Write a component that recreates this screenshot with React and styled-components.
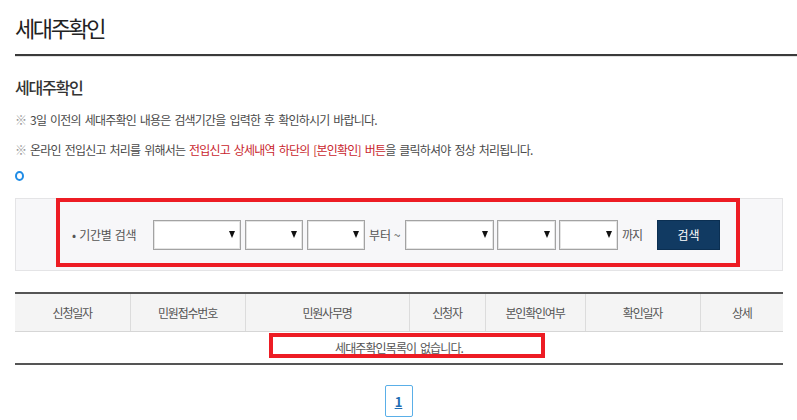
import React from "react";
import styled, { createGlobalStyle } from "styled-components";

const Global = createGlobalStyle`
  html, body { margin: 0; padding: 0; background: #fff; }
  body {
    font-family: "Noto Sans CJK KR", "Noto Sans", sans-serif;
    color: #555;
    overflow: hidden;
  }
  * { box-sizing: border-box; }
`;

const Page = styled.div`
  width: 797px;
  padding-left: 15px;
`;

const TitleBar = styled.div`
  height: 56px;
  padding-top: 12px;
  border-bottom: 2px solid #3a3a3a;
  box-shadow: 0 1px 0 #e2e2e2;
`;

const Title = styled.h1`
  margin: 0;
  font-size: 22px;
  font-weight: 400;
  letter-spacing: -2.4px;
  line-height: 30px;
  color: #222;
`;

const Content = styled.div`
  width: 768px;
`;

const SubTitle = styled.h2`
  margin: 19px 0 0;
  font-size: 16px;
  font-weight: 500;
  letter-spacing: -1.2px;
  line-height: 24px;
  color: #333;
`;

const Note = styled.p`
  margin: ${(p) => p.$top}px 0 0;
  font-size: 12px;
  letter-spacing: -0.8px;
  word-spacing: 2px;
  line-height: 18px;
  color: #4a4a4a;
`;

const Mark = styled.span`
  color: #999;
`;

const Red = styled.span`
  color: #c9262d;
`;

const Ring = styled.span`
  display: block;
  margin-top: 12px;
  width: 9px;
  height: 10px;
  border: 2.5px solid #1f8ce6;
  border-radius: 50%;
`;

const SearchBox = styled.div`
  position: relative;
  margin-top: 17px;
  height: 73px;
  background: #f7f7f9;
  border: 1px solid #e4e4e6;
  display: flex;
  align-items: center;
  justify-content: center;
  padding-right: 6px;
`;

const SearchRow = styled.div`
  display: flex;
  align-items: center;
  font-size: 12px;
  color: #555;
  white-space: nowrap;
`;

const Label = styled.span`
  width: 70px;
  margin-right: 11px;
  letter-spacing: -0.3px;
  word-spacing: 1px;
`;

const Word = styled.span`
  width: ${(p) => p.$w}px;
  margin: 0 ${(p) => p.$r}px 0 4px;
  letter-spacing: ${(p) => p.$ls}px;
`;

const SelectWrap = styled.div`
  position: relative;
  width: ${(p) => p.$w}px;
  height: 30px;
  margin-left: ${(p) => p.$gap || 0}px;
`;

const Select = styled.select`
  appearance: none;
  width: 100%;
  height: 100%;
  background: #fff;
  border: 1px solid #a3a3a3;
  box-shadow: inset 0 0 0 1px #e4e4e4;
  border-radius: 0;
  outline: none;
  font-family: inherit;
`;

const Arrow = styled.span`
  position: absolute;
  right: 6px;
  top: 11px;
  width: 0;
  height: 0;
  border-left: 3.5px solid transparent;
  border-right: 3.5px solid transparent;
  border-top: 7px solid #111;
  pointer-events: none;
`;

const SearchButton = styled.button`
  margin-left: 13px;
  width: 63px;
  height: 30px;
  border: 1px solid #0b2f52;
  background: #113a62;
  color: #fff;
  font-family: inherit;
  font-size: 12px;
  letter-spacing: 0;
  padding: 0;
`;

const Highlight = styled.div`
  position: absolute;
  left: ${(p) => p.$l}px;
  top: ${(p) => p.$t}px;
  width: ${(p) => p.$w}px;
  height: ${(p) => p.$h}px;
  border: 4px solid #ed1c24;
  pointer-events: none;
`;

const Table = styled.table`
  margin-top: 21px;
  width: 768px;
  border-collapse: collapse;
  table-layout: fixed;
  border-top: 2px solid #555;
  border-bottom: 2px solid #555;
  font-size: 12px;
  letter-spacing: -1.2px;
  color: #555;
`;

const Th = styled.th`
  width: ${(p) => p.$w}px;
  height: 38px;
  background: #f4f4f4;
  font-weight: 400;
  border-left: 1px solid #dcdcdc;
  border-bottom: 1px solid #d6d6d6;
  &:first-child { border-left: none; }
`;

const Td = styled.td`
  position: relative;
  height: 33px;
  text-align: center;
  padding: 0;
  letter-spacing: -0.9px;
  word-spacing: 2px;
`;

const Pager = styled.div`
  width: 768px;
  display: flex;
  justify-content: center;
  margin-top: 20px;
`;

const PageNum = styled.a`
  width: 28px;
  height: 32px;
  display: flex;
  align-items: center;
  justify-content: center;
  border: 1px solid #5aafe8;
  border-radius: 2px;
  color: #1f6db3;
  font-weight: 700;
  font-size: 13px;
  text-decoration: underline;
  margin-left: -1px;
`;

const cols = [
  ["신청일자", 115],
  ["민원접수번호", 115],
  ["민원사무명", 164],
  ["신청자", 76],
  ["본인확인여부", 100],
  ["확인일자", 115],
  ["상세", 83],
];

function Dropdown({ w, gap }) {
  return (
    <SelectWrap $w={w} $gap={gap}>
      <Select aria-label="select">
        <option></option>
      </Select>
      <Arrow />
    </SelectWrap>
  );
}

export default function App() {
  return (
    <>
      <Global />
      <Page>
        <TitleBar>
          <Title>세대주확인</Title>
        </TitleBar>
        <Content>
          <SubTitle>세대주확인</SubTitle>
          <Note $top={12}>
            <Mark>※</Mark> 3일 이전의 세대주확인 내용은 검색기간을 입력한 후 확인하시기 바랍니다.
          </Note>
          <Note $top={12}>
            <Mark>※</Mark> 온라인 전입신고 처리를 위해서는 <Red>전입신고 상세내역 하단의 [본인확인] 버튼</Red>을 클릭하셔야 정상 처리됩니다.
          </Note>
          <Ring />
          <SearchBox>
            <SearchRow>
              <Label>• 기간별 검색</Label>
              <Dropdown w={88} />
              <Dropdown w={58} gap={4} />
              <Dropdown w={58} gap={4} />
              <Word $w={34} $r={2} $ls={0}>부터 ~</Word>
              <Dropdown w={89} />
              <Dropdown w={59} gap={3} />
              <Dropdown w={59} gap={3} />
              <Word $w={22} $r={0} $ls={-1}>까지</Word>
              <SearchButton>검색</SearchButton>
            </SearchRow>
            <Highlight $l={40} $t={-1} $w={684} $h={69} />
          </SearchBox>
          <Table>
            <thead>
              <tr>
                {cols.map(([t, w]) => (
                  <Th key={t} $w={w}>{t}</Th>
                ))}
              </tr>
            </thead>
            <tbody>
              <tr>
                <Td colSpan={7}>
                  세대주확인목록이 없습니다.
                  <Highlight $l={254} $t={1} $w={276} $h={25} />
                </Td>
              </tr>
            </tbody>
          </Table>
          <Pager>
            <PageNum>1</PageNum>
          </Pager>
        </Content>
      </Page>
    </>
  );
}
